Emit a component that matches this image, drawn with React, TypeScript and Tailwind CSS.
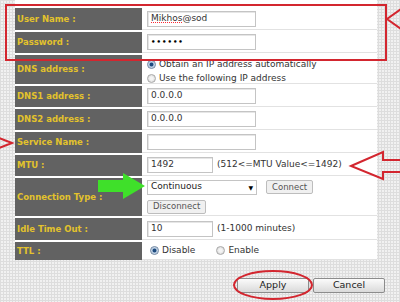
import React from 'react';

const font = { fontFamily: '"DejaVu Sans", Verdana, sans-serif' };

const Label: React.FC<{ text: string }> = ({ text }) => (
  <div className="flex w-[127px] shrink-0 items-center bg-[#626262] pl-[2px] text-[8.5px] font-bold text-[#e3c22c]">
    {text}
  </div>
);

const Input: React.FC<{ value?: string; w?: 'long' | 'short'; children?: React.ReactNode }> = ({ value, w = 'long', children }) => (
  <div
    className={`flex h-[16px] items-center border border-[#c4c4c4] bg-white px-[3px] text-[9px] text-[#333] shadow-[inset_1px_1px_0_#e6e6e6] ${
      w === 'long' ? 'w-[109px]' : 'w-[66px]'
    }`}
  >
    {children ?? value}
  </div>
);

const Radio: React.FC<{ checked?: boolean }> = ({ checked }) =>
  checked ? (
    <span className="inline-block h-[9px] w-[9px] shrink-0 rounded-full border border-[#6d84a0] bg-[radial-gradient(circle,#1d4a7e_30%,#9fb8d4_45%,#e4edf6_75%)]" />
  ) : (
    <span className="inline-block h-[9px] w-[9px] shrink-0 rounded-full border border-[#a9a9a9] bg-[radial-gradient(circle,#f4f4f4_30%,#d2d2d2_90%)]" />
  );

const SmallButton: React.FC<{ text: string }> = ({ text }) => (
  <div className="flex h-[14px] items-center rounded-[2px] border border-[#bdbdbd] bg-[#f0f0f0] px-[5px] text-[8.5px] text-[#555]">
    {text}
  </div>
);

const Row: React.FC<{ label: string; h: string; children: React.ReactNode }> = ({ label, h, children }) => (
  <div className={`flex ${h}`}>
    <Label text={label} />
    <div className="flex flex-1 items-center border-b border-[#e2e2e2] pl-[5px] text-[9px] text-[#333]">{children}</div>
  </div>
);

export default function App() {
  return (
    <div
      style={font}
      className="relative h-[302px] w-[400px] overflow-hidden bg-[#f1f1f1] bg-[linear-gradient(90deg,#dddddd_1px,transparent_1px),linear-gradient(#dddddd_1px,transparent_1px)] bg-[length:3px_3px]"
    >
      <div className="ml-[15px] flex w-[362px] flex-col gap-[2px] bg-white pt-[8px]">
        <Row label="User Name :" h="h-[22px]">
          <Input>
            <span className="underline decoration-red-500 decoration-dotted">Mikhos</span>@sod
          </Input>
        </Row>
        <Row label="Password :" h="h-[21px]">
          <Input>
            <span className="text-[7px] font-bold tracking-[1px] text-black">••••••</span>
          </Input>
        </Row>
        <Row label="DNS address :" h="h-[29px]">
          <div className="flex flex-col gap-[2px] pt-[4px] leading-[12px]">
            <div className="flex items-center gap-[3px]">
              <Radio checked />
              <span>Obtain an IP address automatically</span>
            </div>
            <div className="flex items-center gap-[3px]">
              <Radio />
              <span>Use the following IP address</span>
            </div>
          </div>
        </Row>
        <Row label="DNS1 address :" h="h-[21px]">
          <Input value="0.0.0.0" />
        </Row>
        <Row label="DNS2 address :" h="h-[21px]">
          <Input value="0.0.0.0" />
        </Row>
        <Row label="Service Name :" h="h-[21px]">
          <Input value="" />
        </Row>
        <Row label="MTU :" h="h-[21px]">
          <Input w="short" value="1492" />
          <span className="ml-[4px]">(512&lt;=MTU Value&lt;=1492)</span>
        </Row>
        <Row label="Connection Type :" h="h-[38px]">
          <div className="flex flex-col gap-[5px]">
            <div className="flex items-center gap-[9px]">
              <div className="flex h-[15px] w-[110px] items-center justify-between border border-[#c4c4c4] bg-white px-[3px] text-[9px] text-[#222]">
                <span>Continuous</span>
                <span className="text-[6px] text-black">▼</span>
              </div>
              <SmallButton text="Connect" />
            </div>
            <div className="flex">
              <SmallButton text="Disconnect" />
            </div>
          </div>
        </Row>
        <Row label="Idle Time Out :" h="h-[22px]">
          <Input w="short" value="10" />
          <span className="ml-[4px]">(1-1000 minutes)</span>
        </Row>
        <Row label="TTL :" h="h-[18px]">
          <div className="flex items-center gap-[3px] pl-[3px]">
            <Radio checked />
            <span>Disable</span>
            <span className="ml-[15px]" />
            <Radio />
            <span>Enable</span>
          </div>
        </Row>
      </div>

      <div className="mt-[18px] flex justify-end gap-[4px] pr-[15px]">
        {['Apply', 'Cancel'].map((t) => (
          <div
            key={t}
            className="flex h-[15px] w-[72px] items-center justify-center rounded-[2px] border border-[#8c8c8c] bg-[linear-gradient(#fbfbfb,#dadada)] text-[9.5px] text-[#222]"
          >
            {t}
          </div>
        ))}
      </div>

      <svg className="pointer-events-none absolute left-0 top-0" width="400" height="302" viewBox="0 0 400 302">
        <rect x="6" y="5" width="380" height="55" fill="none" stroke="#d3262f" strokeWidth="2" />
        <polyline points="401,9 387,19 401,29" fill="none" stroke="#d3262f" strokeWidth="2" />
        <polyline points="-1,138 12,143 -1,148" fill="none" stroke="#d3262f" strokeWidth="2" />
        <polygon
          points="351,166 383,152 383,160 402,160 402,172 383,172 383,179"
          fill="none"
          stroke="#d3262f"
          strokeWidth="2"
        />
        <polygon points="98,180 123,180 123,173 145,186 123,199 123,192 98,192" fill="#3fe02a" />
        <ellipse cx="273" cy="285" rx="39" ry="14" fill="none" stroke="#d3262f" strokeWidth="2" />
      </svg>
    </div>
  );
}
